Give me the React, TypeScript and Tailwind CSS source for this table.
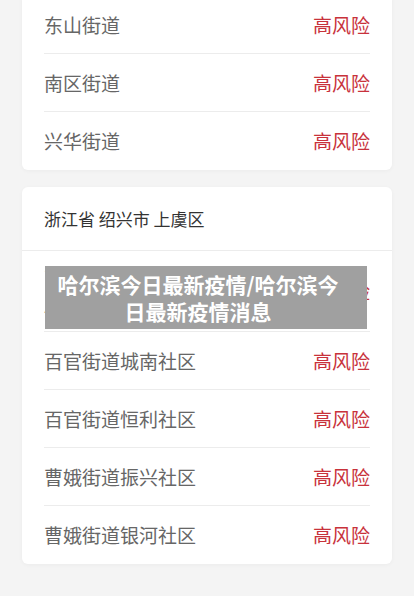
const cnFont = { fontFamily: '"Noto Sans CJK SC", "Noto Sans", sans-serif' };

type Area = { name: string; level: string };

const topAreas: Area[] = [
  { name: '东山街道', level: '高风险' },
  { name: '南区街道', level: '高风险' },
  { name: '兴华街道', level: '高风险' },
];

const shangyuAreas: Area[] = [
  { name: '曹娥街道大通福商（平大路店）', level: '高风险' },
  { name: '百官街道城南社区', level: '高风险' },
  { name: '百官街道恒利社区', level: '高风险' },
  { name: '曹娥街道振兴社区', level: '高风险' },
  { name: '曹娥街道银河社区', level: '高风险' },
];

function AreaRow({ area, last }: { area: Area; last: boolean }) {
  return (
    <div
      className={`flex min-h-[58px] items-center justify-between py-[14px] ${last ? '' : 'border-b border-[#ececec]'}`}
    >
      <span className="max-w-[230px] text-[19px] leading-[26px] text-[#666666]">{area.name}</span>
      <span className="text-[19px] leading-[26px] text-[#c8323b]">{area.level}</span>
    </div>
  );
}

export default function App() {
  return (
    <div className="relative min-h-[596px] overflow-hidden bg-[#f4f4f4]" style={cnFont}>
      {/* first card, scrolled partly out of view */}
      <div className="mx-[22px] -mt-[4px] rounded-b-md bg-white px-[22px] shadow-[0_1px_4px_rgba(0,0,0,0.04)]">
        {topAreas.map((a, i) => (
          <AreaRow key={a.name} area={a} last={i === topAreas.length - 1} />
        ))}
      </div>

      <div className="mx-[22px] mt-[17px] rounded-md bg-white shadow-[0_1px_4px_rgba(0,0,0,0.04)]">
        <div className="flex h-[64px] items-center border-b border-[#ececec] px-[22px] text-[17px] text-[#333333]">
          浙江省 绍兴市 上虞区
        </div>
        <div className="px-[22px]">
          {shangyuAreas.map((a, i) => (
            <AreaRow key={a.name} area={a} last={i === shangyuAreas.length - 1} />
          ))}
        </div>
      </div>

      {/* title overlay */}
      <div className="absolute left-[45px] top-[266px] flex h-[63px] w-[322px] items-center bg-[#a0a0a0] pl-[10px] pr-[26px]">
        <p className="w-full text-center text-[21px] font-bold leading-[27px] text-white">
          哈尔滨今日最新疫情/哈尔滨今日最新疫情消息
        </p>
      </div>
    </div>
  );
}
